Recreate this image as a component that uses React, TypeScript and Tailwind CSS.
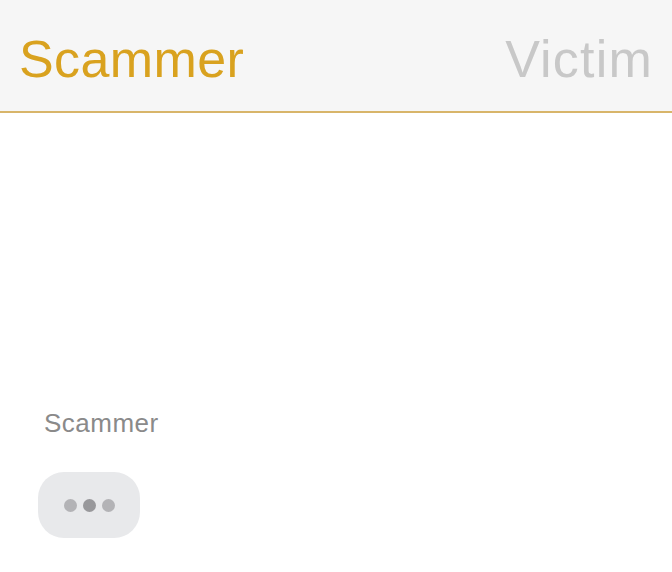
export default function App() {
  return (
    <div className="w-[672px] h-[572px] bg-white font-['Liberation_Sans',Arial,sans-serif] flex flex-col">
      <header className="h-[113px] bg-[#f6f6f6] border-b-2 border-[#d8b56a] flex items-center justify-between pl-[19px] pr-[19px]">
        <h1 className="text-[52px] leading-none text-[#d9a21f] pt-[6px] tracking-[0.4px]">Scammer</h1>
        <span className="text-[52px] leading-none text-[#c8c8c8] pt-[6px] tracking-[1.2px]">Victim</span>
      </header>

      <main className="flex-1 flex flex-col justify-end px-[38px] pb-[34px]">
        <p className="text-[26px] leading-none text-[#8a8a8a] pl-[6px] mb-[36px] tracking-[0.5px]">Scammer</p>
        <div className="w-[102px] h-[66px] rounded-[26px] bg-[#e8e9eb] flex items-center justify-center gap-[6px]">
          <span className="w-[13px] h-[13px] rounded-full bg-[#b3b3b6]" />
          <span className="w-[13px] h-[13px] rounded-full bg-[#98989b]" />
          <span className="w-[13px] h-[13px] rounded-full bg-[#b3b3b6]" />
        </div>
      </main>
    </div>
  );
}
